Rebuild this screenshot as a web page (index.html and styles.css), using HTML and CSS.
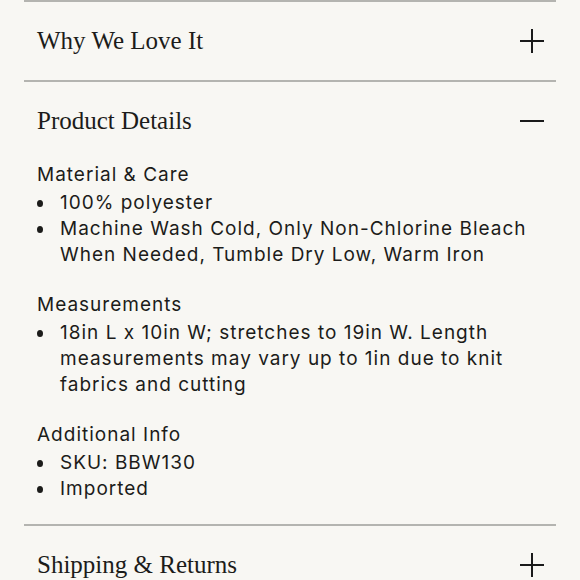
FILE: index.html
```html
<!DOCTYPE html>
<html>
<head>
<meta charset="utf-8">
<link rel="stylesheet" href="styles.css">
</head>
<body>
<div class="accordion">
  <div class="item">
    <div class="head">
      <span class="title">Why We Love It</span>
      <svg class="icon" viewBox="0 0 24 24" width="24" height="24"><path d="M12 0V24M0 12H24" stroke="#1a1a1a" stroke-width="2" fill="none"/></svg>
    </div>
  </div>
  <div class="item">
    <div class="head">
      <span class="title">Product Details</span>
      <svg class="icon" viewBox="0 0 24 24" width="24" height="24"><path d="M0 12H24" stroke="#1a1a1a" stroke-width="2" fill="none"/></svg>
    </div>
    <div class="body">
      <div class="group">
        <div class="label">Material &amp; Care</div>
        <ul>
          <li>100% polyester</li>
          <li>Machine Wash Cold, Only Non-Chlorine Bleach When Needed, Tumble Dry Low, Warm Iron</li>
        </ul>
      </div>
      <div class="group">
        <div class="label">Measurements</div>
        <ul>
          <li>18in L x 10in W; stretches to 19in W. Length measurements may vary up to 1in due to knit fabrics and cutting</li>
        </ul>
      </div>
      <div class="group">
        <div class="label">Additional Info</div>
        <ul>
          <li>SKU: BBW130</li>
          <li>Imported</li>
        </ul>
      </div>
    </div>
  </div>
  <div class="item">
    <div class="head">
      <span class="title">Shipping &amp; Returns</span>
      <svg class="icon" viewBox="0 0 24 24" width="24" height="24"><path d="M12 0V24M0 12H24" stroke="#1a1a1a" stroke-width="2" fill="none"/></svg>
    </div>
  </div>
</div>
</body>
</html>
```
FILE: styles.css
```css
html, body {
  margin: 0;
  padding: 0;
  background: #f8f7f3;
  color: #1c1c1a;
}
body {
  overflow: hidden;
  height: 580px;
}
.accordion {
  margin: 0 24px;
}
.item {
  border-top: 2px solid #b4b4b0;
}
.head {
  display: flex;
  justify-content: space-between;
  align-items: center;
  height: 78px;
  padding: 0 12px 0 13px;
}
.title {
  font-family: "Liberation Serif", serif;
  font-size: 25px;
  color: #1c1c1a;
}
.icon {
  display: block;
}
.body {
  padding: 2px 13px 22px 13px;
  font-family: Inter, "Noto Sans", sans-serif;
  font-size: 19px;
  letter-spacing: 1px;
  line-height: 26px;
}
.label {
  margin-bottom: 2px;
}
.group + .group {
  margin-top: 24px;
}
ul {
  list-style: none;
  margin: 0;
  padding: 0;
}
li {
  position: relative;
  padding-left: 23px;
}
li::before {
  content: "";
  position: absolute;
  left: 0;
  top: 10px;
  width: 6px;
  height: 7px;
  border-radius: 50%;
  background: #1c1c1a;
}
```
